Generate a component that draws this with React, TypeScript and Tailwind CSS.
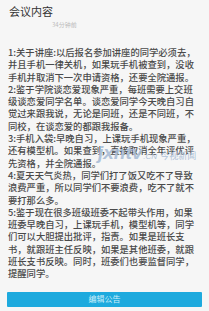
import React from 'react';

const lines: string[] = [
  '1:关于讲座:以后报名参加讲座的同学必须去，',
  '并且手机一律关机，如果玩手机被查到，没收',
  '手机并取消下一次申请资格，还要全院通报。',
  '2:鉴于学院谈恋爱现象严重，每班需要上交班',
  '级谈恋爱同学名单。谈恋爱同学今天晚自习自',
  '觉过来跟我说，无论是同班，还是不同班，不',
  '同校，在谈恋爱的都跟我报备。',
  '3:手机入袋:早晚自习，上课玩手机现象严重，',
  '还有模型机。如果查到，直接取消全年评优评',
  '先资格，并全院通报。',
  '4:夏天天气炎热，同学们打了饭又吃不了导致',
  '浪费严重，所以同学们不要浪费，吃不了就不',
  '要打那么多。',
  '5:鉴于现在很多班级班委不起带头作用，如果',
  '班委早晚自习，上课玩手机，模型机等，同学',
  '们可以大胆提出批评，指责。如果是班长支',
  '书，就跟班主任反映，如果是其他班委，就跟',
  '班长支书反映。同时，班委们也要监督同学，',
  '提醒同学。',
];

const font = { fontFamily: '"Noto Sans CJK SC", "Noto Sans", sans-serif' };

export default function App() {
  return (
    <div className="w-[209px] h-[311px] bg-[#f6f6f6] overflow-hidden relative" style={font}>
      <div className="px-[9px] pt-[3px] h-[40px]">
        <div className="text-[11px] leading-[16px] text-[#333]">会议内容</div>
        <div className="pl-[43px] text-[6px] leading-[10px] text-[#bbb] mt-[1px]">34分钟前</div>
      </div>
      <div className="px-[8px] pt-[6px] text-[9.3px] leading-[12.3px] text-[#4a4a4a] font-medium">
        {lines.map((l, i) => (
          <div key={i} className="whitespace-nowrap">{l}</div>
        ))}
      </div>
      <div className="absolute left-[98px] top-[143px] flex items-baseline text-[#a9bdd6] opacity-90 pointer-events-none">
        <span className="text-[19px] font-bold italic leading-none" style={{ fontFamily: '"Liberation Sans", sans-serif' }}>jxntv</span>
        <span className="text-[8px] italic ml-[1px]" style={{ fontFamily: '"Liberation Sans", sans-serif' }}>.CN</span>
        <span className="text-[9px] ml-[3px]">今视新闻</span>
      </div>
      <div className="mx-[7px] mt-[12px] h-[15px] bg-[#1eaade] rounded-[1px] flex items-center justify-center">
        <span className="text-[8px] text-[#cdeefa]">编辑公告</span>
      </div>
    </div>
  );
}
